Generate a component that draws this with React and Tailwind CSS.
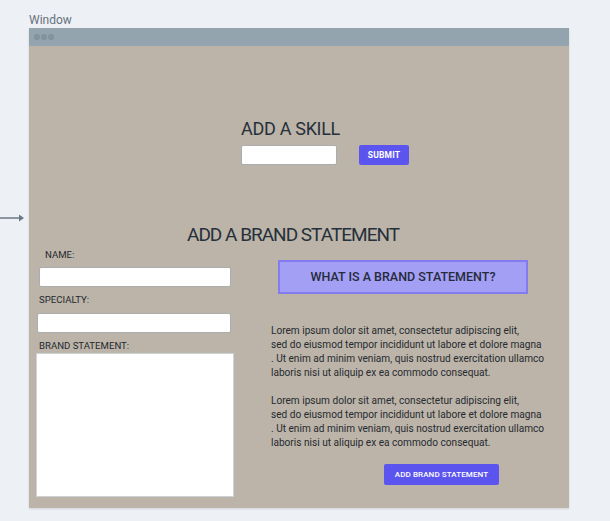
import React from 'react';

const font = { fontFamily: 'Roboto, "DejaVu Sans", sans-serif' };

const loremLines = [
  'Lorem ipsum dolor sit amet, consectetur adipiscing elit,',
  'sed do eiusmod tempor incididunt ut labore et dolore magna',
  '. Ut enim ad minim veniam, quis nostrud exercitation ullamco',
  'laboris nisi ut aliquip ex ea commodo consequat.',
];

const Paragraph = () => (
  <div className="text-[10.1px] leading-[14px] text-[#262b31] whitespace-nowrap">
    {loremLines.map((line, i) => (
      <div key={i}>{line}</div>
    ))}
  </div>
);

const App = () => {
  return (
    <div className="relative w-[610px] h-[521px] bg-[#edf0f4] overflow-hidden" style={font}>
      {/* connector arrow */}
      <svg className="absolute left-0 top-[213px]" width="26" height="10" viewBox="0 0 26 10">
        <line x1="0" y1="5" x2="20" y2="5" stroke="#6b7785" strokeWidth="1.5" />
        <path d="M19 1.5 L24 5 L19 8.5 Z" fill="#6b7785" />
      </svg>

      <div className="pl-[29px] pt-[12px]">
        <div className="text-[12px] leading-[16px] text-[#67727f]">Window</div>

        <div className="w-[540px] shadow-[0_1px_2px_rgba(0,0,0,0.12)]">
          {/* title bar */}
          <div className="h-[18px] bg-[#94a4ae] flex items-center pl-[5px] gap-[1px]">
            <span className="w-[6px] h-[6px] rounded-full bg-[#83939e]" />
            <span className="w-[6px] h-[6px] rounded-full bg-[#83939e]" />
            <span className="w-[6px] h-[6px] rounded-full bg-[#83939e]" />
          </div>

          {/* body */}
          <div className="h-[462px] bg-[#bcb4a8] flex flex-col">
            {/* skill */}
            <div className="ml-[212px] mt-[72px]">
              <div className="text-[18px] leading-[22px] text-[#26303b] tracking-[-0.3px]">ADD A SKILL</div>
              <div className="flex items-center mt-[5px]">
                <input className="w-[96px] h-[20px] bg-white border border-[#a9adad] rounded-[2px] outline-none" />
                <button className="ml-[22px] w-[50px] h-[20px] bg-[#5b54ef] rounded-[2px] text-white text-[8.5px] font-bold tracking-[0.2px]">
                  SUBMIT
                </button>
              </div>
            </div>

            {/* brand statement heading */}
            <div className="ml-[158px] mt-[59px] text-[19px] leading-[22px] text-[#26303b] tracking-[-1px]">
              ADD A BRAND STATEMENT
            </div>

            <div className="flex mt-[3px]">
              {/* left form column */}
              <div className="w-[212px] flex flex-col text-[9.6px] text-[#23292f]">
                <div className="ml-[16px] leading-[12px]">NAME:</div>
                <input className="ml-[10px] mt-[6px] w-[192px] h-[20px] bg-white border border-[#a9adad] rounded-[2px] outline-none" />
                <div className="ml-[10px] mt-[7px] leading-[12px]">SPECIALTY:</div>
                <input className="ml-[8px] mt-[7px] w-[194px] h-[20px] bg-white border border-[#a9adad] rounded-[2px] outline-none" />
                <div className="ml-[10px] mt-[7px] leading-[12px]">BRAND STATEMENT:</div>
                <textarea className="ml-[7px] mt-[1px] w-[198px] h-[144px] bg-white border border-[#cdd2d7] resize-none outline-none" />
              </div>

              {/* right info column */}
              <div className="ml-[30px] flex flex-col pt-[11px]">
                <div className="ml-[7px] w-[250px] h-[34px] bg-[#a29ff5] border-2 border-[#827cf0] flex items-center justify-center text-[12.5px] text-[#262b3a] font-medium">
                  WHAT IS A BRAND STATEMENT?
                </div>
                <div className="mt-[30px]">
                  <Paragraph />
                  <div className="h-[14px]" />
                  <Paragraph />
                </div>
                <button className="ml-[113px] mt-[14px] w-[115px] h-[21px] bg-[#5b54ef] rounded-[2px] text-white text-[8px] font-medium tracking-[0.1px]">
                  ADD BRAND STATEMENT
                </button>
              </div>
            </div>
          </div>
        </div>
      </div>
    </div>
  );
};

export default App;
